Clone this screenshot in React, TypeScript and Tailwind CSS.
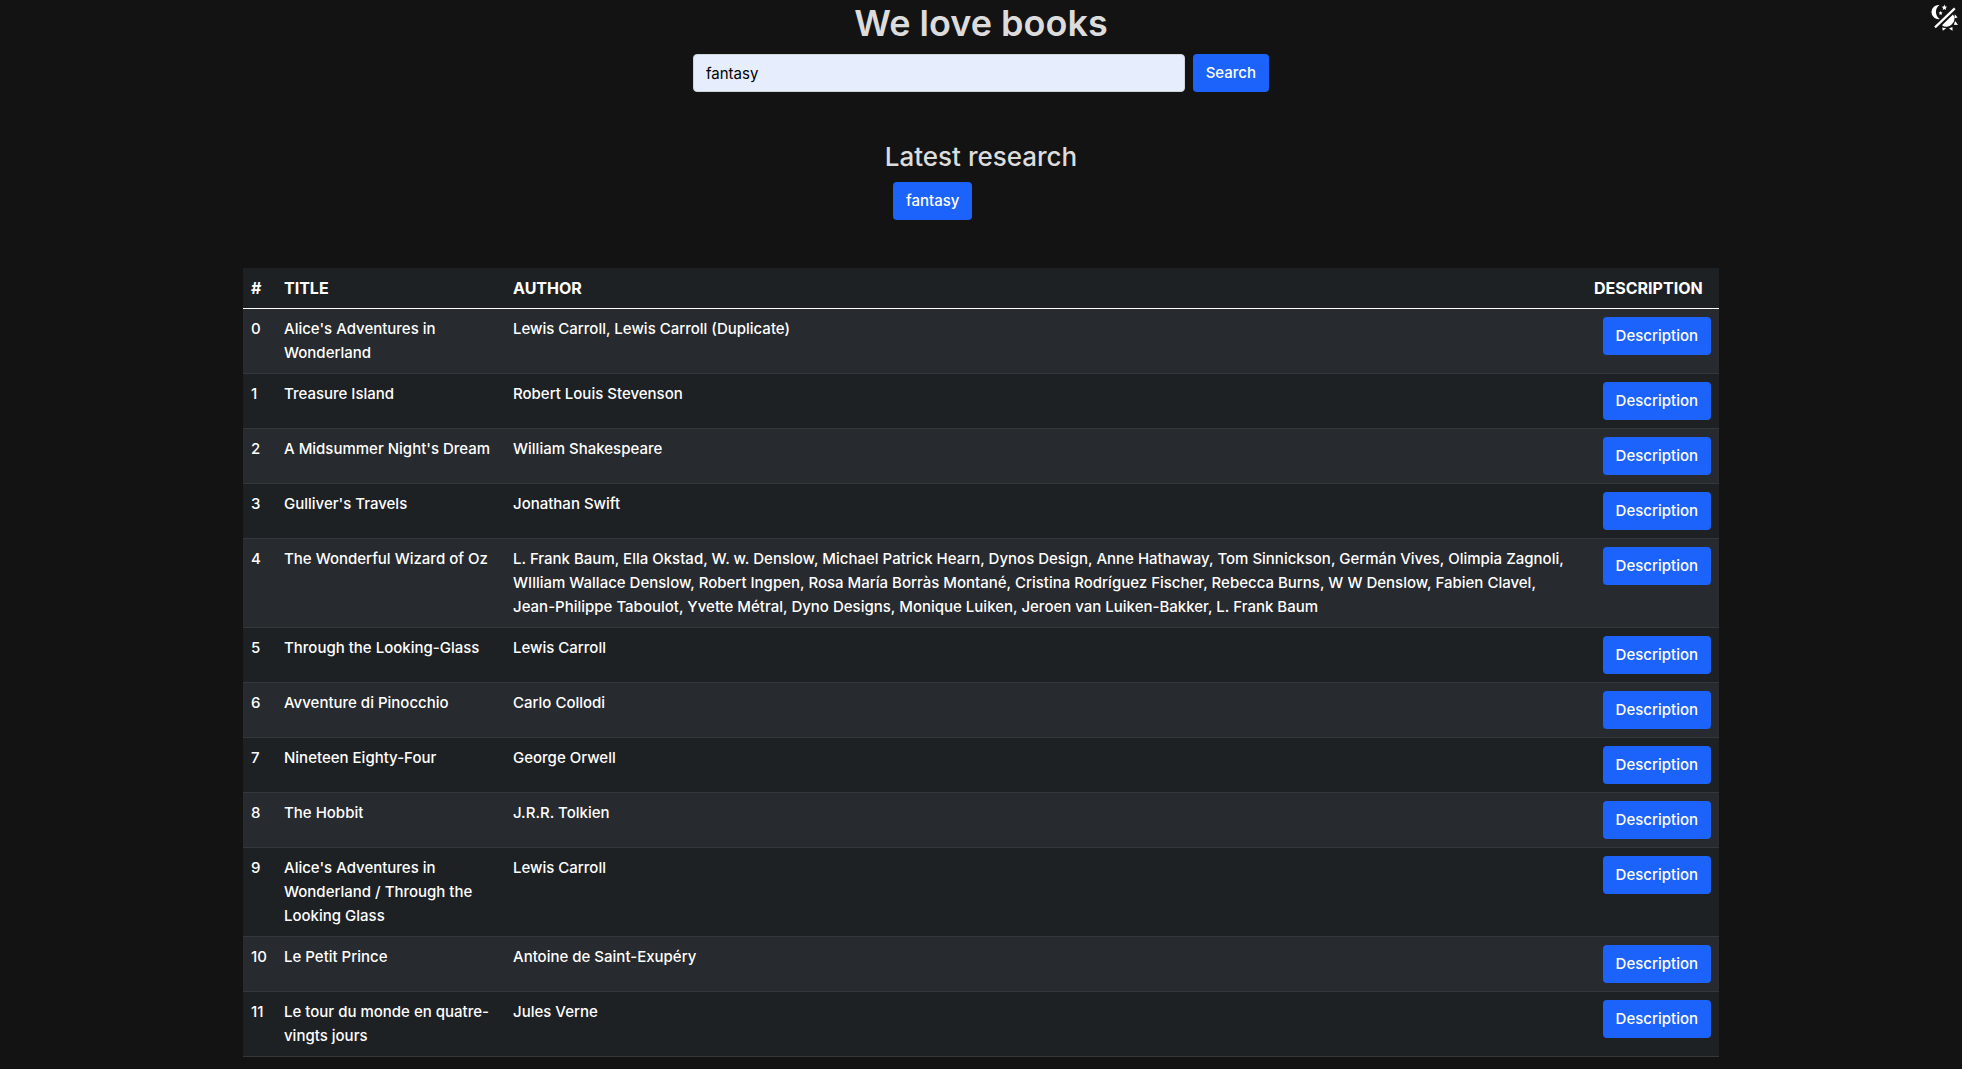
const books = [
  { title: "Alice's Adventures in Wonderland", author: "Lewis Carroll, Lewis Carroll (Duplicate)" },
  { title: "Treasure Island", author: "Robert Louis Stevenson" },
  { title: "A Midsummer Night's Dream", author: "William Shakespeare" },
  { title: "Gulliver's Travels", author: "Jonathan Swift" },
  {
    title: "The Wonderful Wizard of Oz",
    author:
      "L. Frank Baum, Ella Okstad, W. w. Denslow, Michael Patrick Hearn, Dynos Design, Anne Hathaway, Tom Sinnickson, Germán Vives, Olimpia Zagnoli, WIlliam Wallace Denslow, Robert Ingpen, Rosa María Borràs Montané, Cristina Rodríguez Fischer, Rebecca Burns, W W Denslow, Fabien Clavel, Jean-Philippe Taboulot, Yvette Métral, Dyno Designs, Monique Luiken, Jeroen van Luiken-Bakker, L. Frank Baum",
  },
  { title: "Through the Looking-Glass", author: "Lewis Carroll" },
  { title: "Avventure di Pinocchio", author: "Carlo Collodi" },
  { title: "Nineteen Eighty-Four", author: "George Orwell" },
  { title: "The Hobbit", author: "J.R.R. Tolkien" },
  { title: "Alice's Adventures in Wonderland / Through the Looking Glass", author: "Lewis Carroll" },
  { title: "Le Petit Prince", author: "Antoine de Saint-Exupéry" },
  { title: "Le tour du monde en quatre-vingts jours", author: "Jules Verne" },
];

const buttonClass = "h-[38px] rounded bg-[#1b63fb] px-[13px] text-white";
const headClass = "border-b border-white p-2 text-base font-bold";
const cellClass = "border-b border-[#34383b] p-2";

function ThemeIcon() {
  return (
    <svg viewBox="0 0 28 28" className="size-7" fill="currentColor" aria-hidden="true">
      <path d="M8.6 2A7.1 7.1 0 1 0 8.8 16A8.4 8.4 0 0 1 8.6 2Z" />
      <path d="M13.4 1.6l.8 1.9 2 .2-1.5 1.3.4 2-1.7-1.1-1.7 1.1.4-2-1.5-1.3 2-.2Z" />
      <path d="M9.6 8l.6 1.3 1.4.2-1 1 .2 1.4-1.2-.7-1.2.7.2-1.4-1-1 1.4-.2Z" />
      <path d="M23.8 5.4L4 24.4" stroke="currentColor" strokeWidth="2.2" />
      <path d="M22 11.4A7 7 0 0 1 20.6 21.4A7 7 0 0 1 11 22.2Z" />
      <path d="M23.8 11.2l2.8 3.4-3.2.6Z" />
      <path d="M24.2 18l2.8 4-4.2-.2Z" />
      <path d="M21.4 24l.2 3.8-3.6-2.4Z" />
      <path d="M11.2 24.4l4 .8-3.4 2.6Z" />
    </svg>
  );
}

export default function App() {
  return (
    <div className="relative min-h-screen bg-[#131313] font-['Inter',sans-serif] text-[15px] leading-6 font-medium text-white">
      <button type="button" aria-label="Toggle theme" className="absolute top-[3px] right-[3px]">
        <ThemeIcon />
      </button>

      <header className="flex flex-col items-center">
        <h1 className="mb-2 text-[36px] leading-[46px] font-semibold text-[#dcdcdc]">We love books</h1>
        <form className="flex w-[576px] max-w-full gap-2" onSubmit={(e) => e.preventDefault()}>
          <input
            type="text"
            aria-label="Search books"
            defaultValue="fantasy"
            className="h-[38px] min-w-0 flex-1 rounded border border-[#ced4da] bg-[#e6eefd] px-3 font-normal text-black outline-none"
          />
          <button type="submit" className={buttonClass}>
            Search
          </button>
        </form>
      </header>

      <section className="mt-12 flex flex-col items-center">
        <h2 className="mb-2 text-[26px] leading-[34px] font-medium text-[#dcdcdc]">Latest research</h2>
        <div className="flex w-44">
          <button type="button" className={buttonClass}>
            fantasy
          </button>
        </div>
      </section>

      <main className="mt-12 px-[243px] pb-3">
        <table className="w-full table-fixed border-separate border-spacing-0 bg-[#1e2124] text-left">
          <colgroup>
            <col className="w-[33px]" />
            <col className="w-[229px]" />
            <col />
            <col className="w-[133px]" />
          </colgroup>
          <thead>
            <tr>
              <th scope="col" className={headClass}>#</th>
              <th scope="col" className={headClass}>TITLE</th>
              <th scope="col" className={headClass}>AUTHOR</th>
              <th scope="col" className={headClass}>DESCRIPTION</th>
            </tr>
          </thead>
          <tbody>
            {books.map((book, i) => (
              <tr key={i} className="align-top odd:bg-[#272a2e]">
                <td className={cellClass}>{i}</td>
                <td className={cellClass}>{book.title}</td>
                <td className={cellClass}>{book.author}</td>
                <td className={cellClass}>
                  <button type="button" className={`${buttonClass} ml-auto block`}>
                    Description
                  </button>
                </td>
              </tr>
            ))}
          </tbody>
        </table>
      </main>
    </div>
  );
}
